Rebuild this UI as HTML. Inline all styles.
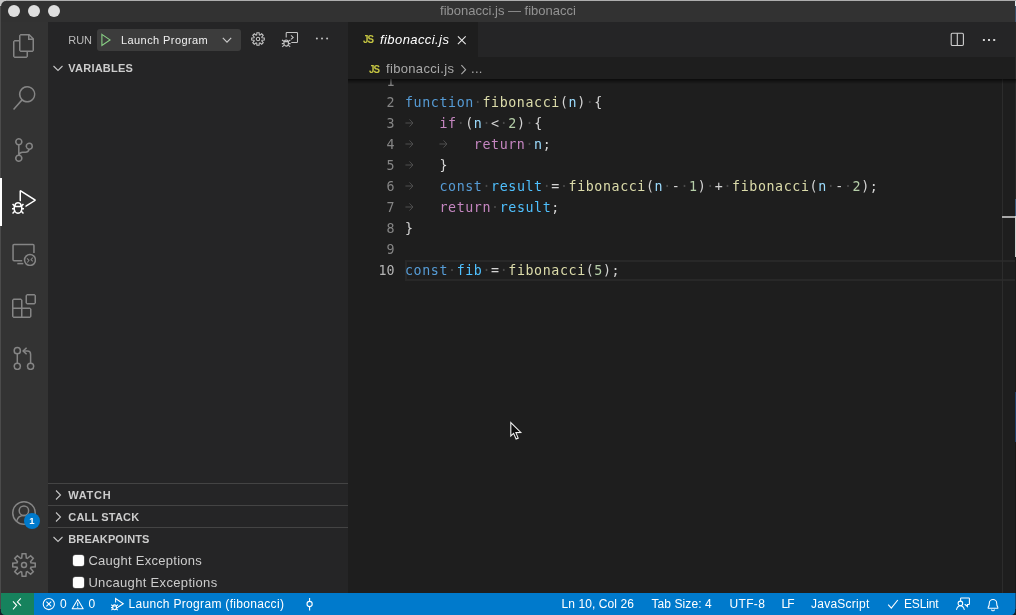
<!DOCTYPE html>
<html lang="en">
<head>
<meta charset="utf-8">
<title>fibonacci.js — fibonacci</title>
<style>
html,body{margin:0;padding:0;background:#1e1e1e;}
body{width:1016px;height:615px;overflow:hidden;position:relative;font-family:"Liberation Sans",sans-serif;font-size:13px;color:#ccc;-webkit-font-smoothing:antialiased;}
.abs{position:absolute;}
#win{position:absolute;left:0;top:0;width:1016px;height:615px;overflow:hidden;will-change:transform;}
/* title bar */
#title{left:0;top:0;width:1016px;height:22px;background:#323232;}
#title .t{position:absolute;left:0;width:1016px;top:0;line-height:22px;text-align:center;color:#939393;font-size:13px;}
.tl{position:absolute;top:5px;width:12px;height:12px;border-radius:50%;background:#dedede;}
/* activity bar */
#act{left:0;top:22px;width:48px;height:571px;background:#333333;}
#act svg{position:absolute;}
#actind{left:0;top:156px;width:2px;height:48px;background:#ffffff;z-index:10;}
/* sidebar */
#side{left:48px;top:22px;width:300px;height:571px;background:#252526;}
.hdr{position:absolute;left:0;width:300px;height:22px;line-height:22px;font-weight:bold;font-size:11px;color:#cccccc;}
.hdr span{position:absolute;left:20.3px;top:0;}
.hdr svg{position:absolute;left:2.2px;top:3px;}
.sep{position:absolute;left:0;width:300px;height:1px;background:#444444;}
.cb{position:absolute;left:24.5px;width:11.8px;height:11px;border-radius:2.5px;background:#fdfdfd;box-shadow:0 0 0 0.5px #6a6a6a;}
.cbl{position:absolute;left:40.4px;white-space:nowrap;height:22px;line-height:22px;font-size:13px;color:#cccccc;}
/* editor */
#tabs{left:348px;top:22px;width:668px;height:35px;background:#252526;}
#tab{left:0;top:0;width:130px;height:35px;background:#1e1e1e;}
#crumbs{left:348px;top:57.5px;width:668px;height:22px;background:#1e1e1e;}
#ed{left:348px;top:79px;width:668px;height:514px;background:#1e1e1e;overflow:hidden;}
.ln{position:absolute;left:0;width:46.5px;text-align:right;color:#858585;height:21px;line-height:21px;font-family:"DejaVu Sans Mono","Liberation Mono",monospace;font-size:13.3px;}
.cl{position:absolute;left:57px;height:21px;line-height:21px;white-space:pre;font-family:"DejaVu Sans Mono","Liberation Mono",monospace;font-size:13.3px;color:#d4d4d4;letter-spacing:0.6px;}
.a{display:inline-block;width:8.6px;height:10px;letter-spacing:0;position:relative;vertical-align:baseline;}.a svg{position:absolute;left:0;top:0;}.k{color:#569cd6}.c{color:#c586c0}.f{color:#dcdcaa}.v{color:#9cdcfe}.n{color:#b5cea8}.w{color:#4a4a4a}.cn{color:#4fc1ff}
/* status */
#status{left:0;top:593px;width:1016px;height:22px;background:#007acc;color:#fff;font-size:12px;line-height:22px;}
#remote{left:0;top:0;width:34px;height:22px;background:#16825d;}
#status .s{position:absolute;top:0;height:22px;line-height:22px;white-space:nowrap;}
#status svg{position:absolute;}
</style>
</head>
<body>
<div id="win">

<!-- TITLE BAR -->
<div id="title" class="abs">
  <div class="tl" style="left:8px"></div>
  <div class="tl" style="left:28px"></div>
  <div class="tl" style="left:48px"></div>
  <div class="t">fibonacci.js — fibonacci</div>
</div>

<!-- ACTIVITY BAR -->
<div id="act" class="abs">
  <div id="actind" class="abs"></div>
  <svg style="left:12px;top:12px" width="24" height="24" viewBox="0 0 24 24" fill="#858585"><path d="M17.5 0h-9L7 1.5V6H2.5L1 7.5v15.07L2.5 24h12.07L16 22.57V18h4.7l1.3-1.43V4.5L17.5 0zm0 2.12l2.38 2.38H17.5V2.12zm-3 20.38h-12v-15H7v9.07L8.5 18h6v4.5zm6-6h-12v-15H16V6h4.5v10.5z"/></svg>
  <svg style="left:12px;top:64px" width="24" height="24" viewBox="0 0 24 24" fill="#858585"><path d="M15.25 0a8.25 8.25 0 0 0-6.18 13.72L1 22.88l1.12 1.12 8.05-9.12A8.251 8.251 0 1 0 15.25.01V0zm0 15a6.75 6.75 0 1 1 0-13.5 6.75 6.75 0 0 1 0 13.5z"/></svg>
  <svg style="left:12px;top:116px" width="24" height="24" viewBox="0 0 24 24" fill="#858585"><path d="M21.007 8.222A3.738 3.738 0 0 0 15.045 5.2a3.737 3.737 0 0 0 1.156 6.583 2.988 2.988 0 0 1-2.668 1.67h-2.99a4.456 4.456 0 0 0-2.989 1.165V7.4a3.737 3.737 0 1 0-1.494 0v9.117a3.776 3.776 0 1 0 1.816.099 2.99 2.99 0 0 1 2.668-1.667h2.99a4.484 4.484 0 0 0 4.223-3.039 3.736 3.736 0 0 0 3.25-3.687zM4.565 3.738a2.242 2.242 0 1 1 4.484 0 2.242 2.242 0 0 1-4.484 0zm4.484 16.441a2.242 2.242 0 1 1-4.484 0 2.242 2.242 0 0 1 4.484 0zm8.221-9.715a2.242 2.242 0 1 1 0-4.485 2.242 2.242 0 0 1 0 4.485z"/></svg>
  <svg style="left:12px;top:168px" width="24" height="24" viewBox="0 0 24 24" fill="#ffffff"><path d="M10.94 13.5l-1.32 1.32a3.73 3.73 0 0 0-7.24 0L1.06 13.5 0 14.56l1.72 1.72-.22.22V18H0v1.5h1.5v.08c.077.489.214.966.41 1.42L0 22.94 1.06 24l1.65-1.65A4.308 4.308 0 0 0 6 24a4.31 4.31 0 0 0 3.29-1.65L10.94 24 12 22.94 10.09 21c.198-.464.336-.951.41-1.45v-.1H12V18h-1.5v-1.5l-.22-.22L12 14.56l-1.06-1.06zM6 13.5a2.25 2.25 0 0 1 2.25 2.25h-4.5A2.25 2.25 0 0 1 6 13.5zm3 6a3.33 3.33 0 0 1-3 3 3.33 3.33 0 0 1-3-3v-2.25h6v2.25zm14.76-9.9v1.26L13.5 17.37V15.6l8.5-5.37L9 2v9.46a5.07 5.07 0 0 0-1.5-.72V.63L8.64 0l15.12 9.6z"/></svg>
  <svg style="left:12px;top:272px" width="24" height="24" viewBox="0 0 24 24" fill="#858585"><path d="M13.5 1.5L15 0h7.5L24 1.5V9l-1.5 1.5H15L13.5 9V1.5zm1.5 0V9h7.5V1.5H15zM0 15V6l1.5-1.5H9L10.5 6v7.5H18l1.5 1.5v7.5L18 24H1.5L0 22.5V15zm9-1.5V6H1.5v7.5H9zM9 15H1.5v7.5H9V15zm1.5 7.5H18V15h-7.5v7.5z"/></svg>
  <svg style="left:12px;top:220px" width="24" height="24" viewBox="0 0 24 24" fill="none" stroke="#858585" stroke-width="1.5"><path d="M10.2 18.85H2.05a1 1 0 0 1-1-1V3.55a1 1 0 0 1 1-1H20.95a1 1 0 0 1 1 1V11"/><path d="M5.3 21.6H11.3"/><circle cx="18" cy="18" r="5.45"/><path d="M15 16.3L17 18.4L15.3 20.5M20.7 15.7L19 17.7L20.8 19.4" stroke-width="1.05"/></svg>
  <svg style="left:12px;top:324px" width="24" height="24" viewBox="0 0 24 24" fill="none" stroke="#858585" stroke-width="1.5"><circle cx="5.3" cy="4.7" r="3.1"/><circle cx="5.3" cy="20.3" r="3.1"/><circle cx="18.6" cy="20.3" r="3.1"/><path d="M5.3 7.8V17.2"/><path d="M18.6 17.2V8.2a3.2 3.2 0 0 0-3.2-3.2H11.5"/><path d="M14.6 1.7L11.1 5L14.6 8.3"/></svg>
  <svg style="left:12px;top:479px" width="24" height="24" viewBox="0 0 24 24" fill="none" stroke="#858585" stroke-width="1.5"><circle cx="12" cy="12" r="11.25"/><circle cx="11.9" cy="9.7" r="4.7"/><path d="M4.6 20.3a7.6 7.6 0 0 1 14.8 0"/></svg>
  <div class="abs" style="left:24px;top:491px;width:16px;height:16px;border-radius:50%;background:#007acc;color:#fff;font-size:9.5px;font-weight:bold;line-height:16.5px;text-align:center;">1</div>
  <svg style="left:12px;top:531px" width="24" height="24" viewBox="0 0 24 24" fill="none" stroke="#858585" stroke-width="1.5" stroke-linejoin="miter"><path d="M9.68 5.08 L10.14 0.75 L13.86 0.75 L14.32 5.08 L15.26 5.47 L18.64 2.73 L21.27 5.36 L18.53 8.74 L18.92 9.68 L23.25 10.14 L23.25 13.86 L18.92 14.32 L18.53 15.26 L21.27 18.64 L18.64 21.27 L15.26 18.53 L14.32 18.92 L13.86 23.25 L10.14 23.25 L9.68 18.92 L8.74 18.53 L5.36 21.27 L2.73 18.64 L5.47 15.26 L5.08 14.32 L0.75 13.86 L0.75 10.14 L5.08 9.68 L5.47 8.74 L2.73 5.36 L5.36 2.73 L8.74 5.47Z"/><circle cx="12" cy="12" r="2.5"/></svg>
  <!--ACTICONS-->
</div>

<!-- SIDEBAR -->
<div id="side" class="abs">
  <div class="abs" style="left:20.3px;top:7.3px;height:22px;line-height:22px;font-size:11px;color:#bbbbbb;letter-spacing:-0.1px;">RUN</div>
  <div class="abs" style="left:49px;top:7px;width:144px;height:22px;border-radius:3px;background:#3c3c3c;"></div>
  <svg class="abs" style="left:52px;top:10px" width="16" height="16" viewBox="0 0 16 16" fill="none" stroke="#89d185" stroke-width="1.1" stroke-linejoin="miter"><path d="M1.9 2.4L10 7.9L1.9 13.4Z"/></svg>
  <div class="abs" style="left:73px;top:7px;height:22px;line-height:22px;font-size:11px;color:#f0f0f0;letter-spacing:0.42px;white-space:nowrap;">Launch Program</div>
  <svg class="abs" style="left:171px;top:10px" width="16" height="16" viewBox="0 0 16 16" fill="none" stroke="#cccccc" stroke-width="1.1"><path d="M3.8 5.9L8 10.2L12.2 5.9"/></svg>
  <svg class="abs" style="left:202px;top:9px" width="16" height="16" viewBox="0 0 16 16" fill="none" stroke="#c5c5c5" stroke-width="1.05" stroke-linejoin="miter"><path d="M6.70 4.01 L6.89 1.70 L9.11 1.70 L9.30 4.01 L9.91 4.26 L11.67 2.76 L13.24 4.33 L11.74 6.09 L11.99 6.70 L14.30 6.89 L14.30 9.11 L11.99 9.30 L11.74 9.91 L13.24 11.67 L11.67 13.24 L9.91 11.74 L9.30 11.99 L9.11 14.30 L6.89 14.30 L6.70 11.99 L6.09 11.74 L4.33 13.24 L2.76 11.67 L4.26 9.91 L4.01 9.30 L1.70 9.11 L1.70 6.89 L4.01 6.70 L4.26 6.09 L2.76 4.33 L4.33 2.76 L6.09 4.26Z"/><circle cx="8" cy="8" r="1.7"/></svg>
  <svg class="abs" style="left:233px;top:9px" width="18" height="18" viewBox="0 0 18 18" fill="none" stroke="#c5c5c5" stroke-width="1.05"><path d="M5.2 6.5V2.2a.7.7 0 0 1 .7-.7H15.8a.7.7 0 0 1 .7.7V10.8a.7.7 0 0 1-.7.7H10.3"/><path d="M10 4.4L12.2 6.4L10 8.4"/><ellipse cx="5.2" cy="12" rx="2.3" ry="3.1"/><path d="M2.9 10.6H7.5M1 9L2.9 10.3M9.4 9L7.5 10.3M0.8 12.6H2.9M7.5 12.6H9.6M1.2 15.8L3.2 14.2M9.2 15.8L7.2 14.2"/></svg>
  <svg class="abs" style="left:266px;top:9px" width="16" height="16" viewBox="0 0 16 16" fill="#c5c5c5"><circle cx="2.9" cy="7.5" r="1"/><circle cx="8" cy="7.5" r="1"/><circle cx="13.1" cy="7.5" r="1"/></svg>
  <!--SIDETOP-->
  <div class="hdr" style="top:35px"><svg width="16" height="16" viewBox="0 0 16 16"><path d="M3.5 6 L8 10.5 L12.5 6" fill="none" stroke="#c5c5c5" stroke-width="1.1"/></svg><span style="letter-spacing:0.23px">VARIABLES</span></div>

  <div class="sep" style="top:461px"></div>
  <div class="hdr" style="top:462px"><svg width="16" height="16" viewBox="0 0 16 16"><path d="M6 3.5 L10.5 8 L6 12.5" fill="none" stroke="#c5c5c5" stroke-width="1.1"/></svg><span style="letter-spacing:0.7px">WATCH</span></div>
  <div class="sep" style="top:483px"></div>
  <div class="hdr" style="top:484px"><svg width="16" height="16" viewBox="0 0 16 16"><path d="M6 3.5 L10.5 8 L6 12.5" fill="none" stroke="#c5c5c5" stroke-width="1.1"/></svg><span style="letter-spacing:0.17px">CALL STACK</span></div>
  <div class="sep" style="top:505px"></div>
  <div class="hdr" style="top:506px"><svg width="16" height="16" viewBox="0 0 16 16"><path d="M3.5 6 L8 10.5 L12.5 6" fill="none" stroke="#c5c5c5" stroke-width="1.1"/></svg><span style="letter-spacing:0.1px">BREAKPOINTS</span></div>
  <div class="cb" style="top:533px"></div><div class="cbl" style="top:528px;letter-spacing:0.27px">Caught Exceptions</div>
  <div class="cb" style="top:555px"></div><div class="cbl" style="top:550.3px;letter-spacing:0.33px">Uncaught Exceptions</div>
</div>

<!-- TABS -->
<div id="tabs" class="abs">
  <div id="tab" class="abs">
    <div class="abs" style="left:15px;top:0;height:35px;line-height:35px;font-size:10.5px;font-weight:bold;color:#c6c642;letter-spacing:-1px;transform:scaleX(0.93);transform-origin:0 50%;">JS</div>
    <div class="abs" style="left:32px;top:0;height:35px;line-height:35px;font-size:13px;font-style:italic;color:#ffffff;letter-spacing:0.42px;white-space:nowrap;">fibonacci.js</div>
    <svg class="abs" style="left:106px;top:10px" width="16" height="16" viewBox="0 0 16 16" fill="none" stroke="#e8e8e8" stroke-width="1.1"><path d="M3.9 4.4L11.7 12.2M11.7 4.4L3.9 12.2"/></svg>
    <!--TAB-->
  </div>
  <svg class="abs" style="left:601px;top:9px" width="16" height="16" viewBox="0 0 16 16" fill="none" stroke="#d0d0d0" stroke-width="1.1"><rect x="2.2" y="2.3" width="12.2" height="12.2" rx="1.2"/><path d="M8.3 2.3V14.5"/></svg>
  <svg class="abs" style="left:633px;top:10px" width="16" height="16" viewBox="0 0 16 16" fill="#d0d0d0"><rect x="1.9" y="7" width="2" height="2"/><rect x="7" y="7" width="2" height="2"/><rect x="12.2" y="7" width="2" height="2"/></svg>
  <!--TABACTIONS-->
</div>

<!-- BREADCRUMBS -->
<div id="crumbs" class="abs">
  <div class="abs" style="left:21px;top:0;height:22px;line-height:22px;font-size:10.5px;font-weight:bold;color:#c6c642;letter-spacing:-1px;transform:scaleX(0.93);transform-origin:0 50%;">JS</div>
  <div class="abs" style="left:38px;top:0;height:22px;line-height:22px;font-size:13px;color:#a9a9a9;letter-spacing:0.33px;white-space:nowrap;">fibonacci.js</div>
  <svg class="abs" style="left:108px;top:3px" width="16" height="16" viewBox="0 0 16 16" fill="none" stroke="#a9a9a9" stroke-width="1.1"><path d="M5.4 4.2L9.6 8.7L5.4 13.2"/></svg>
  <div class="abs" style="left:123px;top:0;height:22px;line-height:22px;font-size:13px;color:#a9a9a9;letter-spacing:0.3px;">...</div>
  <!--CRUMBS-->
</div>

<!-- EDITOR -->
<div id="ed" class="abs">
  <div class="abs" style="left:0;top:0;width:668px;height:5px;background:linear-gradient(rgba(0,0,0,0.6),rgba(0,0,0,0));z-index:5"></div>
  <div class="abs" id="curline" style="left:57px;top:181px;width:611px;height:21px;box-sizing:border-box;border:2px solid #282828;border-right:none;"></div>
  <div class="ln" style="top:-8px">1</div>
  <div class="ln" style="top:13px">2</div><div class="cl" style="top:13px"><span class="k">function</span><span class="w">·</span><span class="f">fibonacci</span>(<span class="v">n</span>)<span class="w">·</span>{</div>
  <div class="ln" style="top:34px">3</div><div class="cl" style="top:34px"><span class="w"><span class="a"><svg width="9" height="10" viewBox="0 0 9 10" fill="none" stroke="#4e4e4e" stroke-width="1"><path d="M0.4 5H7.8M4.5 1.4L8 5L4.5 8.6"/></svg></span>   </span><span class="c">if</span><span class="w">·</span>(<span class="v">n</span><span class="w">·</span>&lt;<span class="w">·</span><span class="n">2</span>)<span class="w">·</span>{</div>
  <div class="ln" style="top:55px">4</div><div class="cl" style="top:55px"><span class="w"><span class="a"><svg width="9" height="10" viewBox="0 0 9 10" fill="none" stroke="#4e4e4e" stroke-width="1"><path d="M0.4 5H7.8M4.5 1.4L8 5L4.5 8.6"/></svg></span>   <span class="a"><svg width="9" height="10" viewBox="0 0 9 10" fill="none" stroke="#4e4e4e" stroke-width="1"><path d="M0.4 5H7.8M4.5 1.4L8 5L4.5 8.6"/></svg></span>   </span><span class="c">return</span><span class="w">·</span><span class="v">n</span>;</div>
  <div class="ln" style="top:76px">5</div><div class="cl" style="top:76px"><span class="w"><span class="a"><svg width="9" height="10" viewBox="0 0 9 10" fill="none" stroke="#4e4e4e" stroke-width="1"><path d="M0.4 5H7.8M4.5 1.4L8 5L4.5 8.6"/></svg></span>   </span>}</div>
  <div class="ln" style="top:97px">6</div><div class="cl" style="top:97px"><span class="w"><span class="a"><svg width="9" height="10" viewBox="0 0 9 10" fill="none" stroke="#4e4e4e" stroke-width="1"><path d="M0.4 5H7.8M4.5 1.4L8 5L4.5 8.6"/></svg></span>   </span><span class="k">const</span><span class="w">·</span><span class="cn">result</span><span class="w">·</span>=<span class="w">·</span><span class="f">fibonacci</span>(<span class="v">n</span><span class="w">·</span>-<span class="w">·</span><span class="n">1</span>)<span class="w">·</span>+<span class="w">·</span><span class="f">fibonacci</span>(<span class="v">n</span><span class="w">·</span>-<span class="w">·</span><span class="n">2</span>);</div>
  <div class="ln" style="top:118px">7</div><div class="cl" style="top:118px"><span class="w"><span class="a"><svg width="9" height="10" viewBox="0 0 9 10" fill="none" stroke="#4e4e4e" stroke-width="1"><path d="M0.4 5H7.8M4.5 1.4L8 5L4.5 8.6"/></svg></span>   </span><span class="c">return</span><span class="w">·</span><span class="cn">result</span>;</div>
  <div class="ln" style="top:139px">8</div><div class="cl" style="top:139px">}</div>
  <div class="ln" style="top:160px">9</div>
  <div class="ln" style="top:181px;color:#b4b4b4">10</div><div class="cl" style="top:181px"><span class="k">const</span><span class="w">·</span><span class="cn">fib</span><span class="w">·</span>=<span class="w">·</span><span class="f">fibonacci</span>(<span class="n">5</span>);</div>
  <!--CODE-->
</div>

<!-- STATUS BAR -->
<div id="status" class="abs">
  <div id="remote" class="abs"></div>
  <svg class="abs" style="left:9px;top:3px" width="16" height="16" viewBox="0 0 16 16" fill="none" stroke="#ffffff" stroke-width="1.1"><path d="M4 5.3L7.6 9.3L4 13.3M11.8 2.3L8.4 6L12 9.6"/></svg>
  <svg class="abs" style="left:41px;top:3px" width="16" height="16" viewBox="0 0 16 16" fill="none" stroke="#ffffff" stroke-width="1.05"><circle cx="7.8" cy="8" r="5.6"/><path d="M5.4 5.6L10.2 10.4M10.2 5.6L5.4 10.4"/></svg>
  <div class="s" style="left:60px;">0</div>
  <svg class="abs" style="left:70px;top:3px" width="16" height="16" viewBox="0 0 16 16" fill="none" stroke="#ffffff" stroke-width="1.05" stroke-linejoin="round"><path d="M7.7 3.4L13.2 12.8H2.2Z"/><path d="M7.7 6.6V9.9M7.7 10.8V11.8"/></svg>
  <div class="s" style="left:88.5px;">0</div>
  <svg class="abs" style="left:110px;top:3px" width="16" height="16" viewBox="0 0 16 16" fill="none" stroke="#ffffff" stroke-width="1.05"><path d="M5.6 6.6V2.6L13.3 7.7L8.2 11"/><ellipse cx="4.6" cy="11.2" rx="1.9" ry="2.5"/><path d="M2.7 10H6.5M1.2 8.8L2.8 9.9M8 8.8L6.4 9.9M1 11.6H2.7M6.5 11.6H8.2M1.4 14.2L3 12.9M7.8 14.2L6.2 12.9"/></svg>
  <div class="s" style="left:128.5px;letter-spacing:0.32px;">Launch Program (fibonacci)</div>
  <svg class="abs" style="left:302px;top:3px" width="16" height="16" viewBox="0 0 16 16" fill="none" stroke="#ffffff" stroke-width="1.1"><circle cx="7.6" cy="8" r="2.6"/><path d="M7.6 2V5.4M7.6 10.6V14.4"/></svg>
  <div class="s" style="left:561.5px;letter-spacing:0.08px;">Ln 10, Col 26</div>
  <div class="s" style="left:651.5px;letter-spacing:0.08px;">Tab Size: 4</div>
  <div class="s" style="left:729.5px;letter-spacing:0.34px;">UTF-8</div>
  <div class="s" style="left:781.5px;letter-spacing:-0.8px;">LF</div>
  <div class="s" style="left:811px;letter-spacing:0.25px;">JavaScript</div>
  <svg class="abs" style="left:885px;top:3px" width="16" height="16" viewBox="0 0 16 16" fill="none" stroke="#ffffff" stroke-width="1.1"><path d="M3.2 8.6L6.3 12.2L12.8 4"/></svg>
  <div class="s" style="left:904px;letter-spacing:-0.13px;">ESLint</div>
  <svg class="abs" style="left:955px;top:3px" width="16" height="16" viewBox="0 0 16 16" fill="none" stroke="#ffffff" stroke-width="1.05"><path d="M5.6 5.4V2.6a.6.6 0 0 1 .6-.6H13.8a.6.6 0 0 1 .6.6V7.9a.6.6 0 0 1-.6.6H12.4V10.6L10.2 8.5H9.6"/><circle cx="5.4" cy="7.4" r="2.3"/><path d="M1.4 13.8C2.2 11 4 9.8 5.4 9.8S8.6 11 9.4 13.8"/></svg>
  <svg class="abs" style="left:985px;top:3px" width="16" height="16" viewBox="0 0 16 16" fill="none" stroke="#ffffff" stroke-width="1.05" stroke-linejoin="round"><path d="M3.2 12.2V11.2C4.2 10.2 4.3 9 4.3 7.2A3.7 3.7 0 0 1 11.7 7.2C11.7 9 11.8 10.2 12.8 11.2V12.2Z"/><path d="M6.6 13.4A1.4 1.4 0 0 0 9.4 13.4"/></svg>
  <!--STATUS-->
</div>

<!-- window chrome edges / overview ruler / pointer -->
<div class="abs" style="left:1002px;top:79px;width:1px;height:514px;background:#2c2c2c;"></div>
<div class="abs" style="left:1002px;top:216px;width:13px;height:2px;background:#a8a8a8;"></div>
<div class="abs" style="left:0;top:0;width:1016px;height:1.1px;background:#aeaeae;"></div>
<div class="abs" style="left:0;top:1px;width:1px;height:614px;background:#4b4b4b;"></div>
<div class="abs" style="left:1014.6px;top:1px;width:1.4px;height:614px;background:linear-gradient(#dfe6ea 0,#dfe6ea 5px,#3a5068 5px,#3a5068 21px,#282828 21px,#282828 198px,#3b5a78 198px,#3b5a78 215px,#d0d0d0 215px,#d0d0d0 256px,#1b1b1b 256px,#1b1b1b 391px,#1f3f66 391px,#1f3f66 441px,#181818 441px,#181818 592px,#0a4e80 592px);"></div>
<svg class="abs" style="left:0;top:0" width="6" height="6" viewBox="0 0 6 6"><path d="M0 0H6V1.1A4.9 4.9 0 0 0 1.1 6H0Z" fill="#c8c8c8"/></svg>
<svg class="abs" style="left:0;top:609px" width="6" height="6" viewBox="0 0 6 6"><path d="M0 6H5A4.2 4.2 0 0 1 0.8 1.8V0H0Z" fill="#15202a"/></svg>
<svg class="abs" style="left:1010px;top:609px" width="6" height="6" viewBox="0 0 6 6"><path d="M6 6H1A4.2 4.2 0 0 0 5.2 1.8V0H6Z" fill="#15202a"/></svg>
<svg class="abs" style="left:505px;top:416px" width="24" height="28" viewBox="0 0 24 28"><path d="M5.8 6.6V20L8.6 17.4L11.1 23L13.2 22.1L10.9 16.6L15.8 16.4Z" fill="#0c0c0c" stroke="#f0f0f0" stroke-width="1.1" stroke-linejoin="miter"/></svg>

</div>
</body>
</html>
